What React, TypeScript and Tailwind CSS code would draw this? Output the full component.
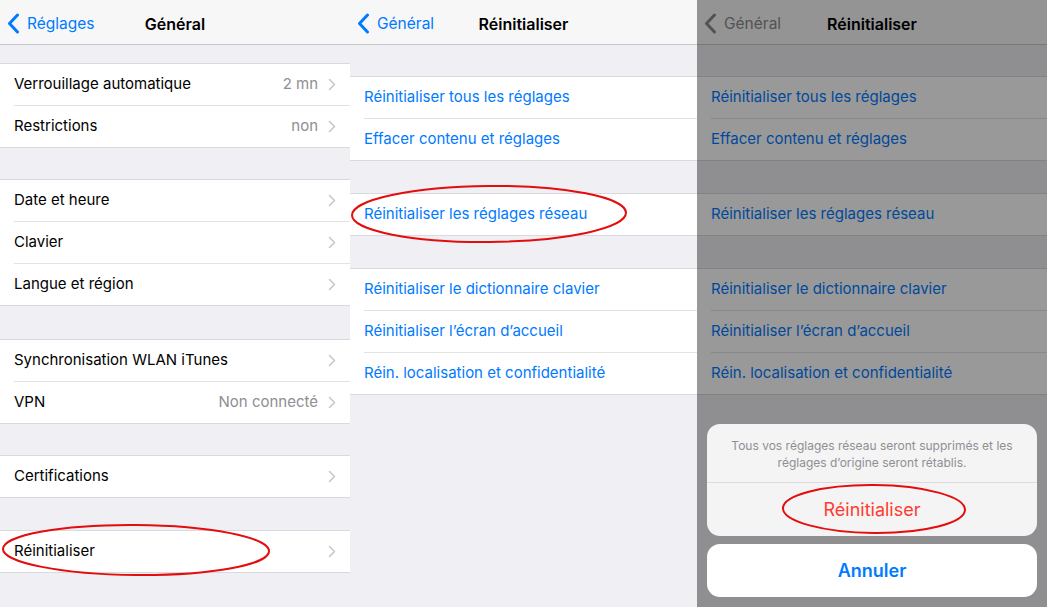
import type { FC, ReactNode } from 'react'

const FONT = "font-['Inter','Liberation_Sans',sans-serif]"

const Chevron: FC = () => (
  <svg width="8" height="13" viewBox="0 0 8 13" fill="none" className="ml-[10px] shrink-0">
    <path d="M1.5 1.5L6.5 6.5L1.5 11.5" stroke="#c7c7cc" strokeWidth="1.6" strokeLinecap="round" strokeLinejoin="round" />
  </svg>
)

const BackChevron: FC<{ color: string }> = ({ color }) => (
  <svg width="13" height="21" viewBox="0 0 13 21" fill="none">
    <path d="M10.5 2L2.5 10.5L10.5 19" stroke={color} strokeWidth="3" strokeLinecap="round" strokeLinejoin="round" />
  </svg>
)

type Row = { label: string; value?: string; chevron?: boolean }

const NavBar: FC<{ back: string; title: string; dim?: boolean }> = ({ back, title, dim }) => (
  <div className="relative h-[45px] shrink-0 bg-[#f7f7f8] border-b border-[#c8c7cc] flex items-center pt-[3px]">
    <div className="flex items-center gap-[7px] pl-[7px]">
      <BackChevron color={dim ? '#8a8a8a' : '#007aff'} />
      <span className={`text-[15.5px] ${dim ? 'text-[#8a8a8a]' : 'text-[#007aff]'}`}>{back}</span>
    </div>
    <div className="absolute inset-0 pt-[3px] flex items-center justify-center pointer-events-none">
      <span className="text-[16px] font-semibold text-black">{title}</span>
    </div>
  </div>
)

const Group: FC<{ rows: Row[]; blue?: boolean; mt: string }> = ({ rows, blue, mt }) => (
  <div className={`${mt} bg-white border-t border-[#d9d9de]`}>
    {rows.map((r, i) => (
      <div key={r.label} className="pl-[14px]">
        <div
          className={`h-[42px] flex items-center pr-[14px] border-b ${
            i === rows.length - 1 ? 'border-[#d9d9de] -ml-[14px] pl-[14px]' : 'border-[#e3e3e6]'
          }`}
        >
          <span className={`flex-1 text-[15px] ${blue ? 'text-[#007aff]' : 'text-black'}`}>{r.label}</span>
          {r.value && <span className="text-[15px] text-[#8e8e93]">{r.value}</span>}
          {r.chevron && <Chevron />}
        </div>
      </div>
    ))}
  </div>
)

const Ellipse: FC<{ cx: number; cy: number; rx: number; ry: number; rot?: number }> = ({ cx, cy, rx, ry, rot = 0 }) => (
  <svg className="absolute inset-0 w-full h-full pointer-events-none" fill="none">
    <ellipse cx={cx} cy={cy} rx={rx} ry={ry} stroke="#e30d0d" strokeWidth="2" transform={`rotate(${rot} ${cx} ${cy})`} />
  </svg>
)

const ResetList: FC = () => (
  <>
    <Group
      mt="mt-[31px]"
      blue
      rows={[{ label: 'Réinitialiser tous les réglages' }, { label: 'Effacer contenu et réglages' }]}
    />
    <Group mt="mt-[32px]" blue rows={[{ label: 'Réinitialiser les réglages réseau' }]} />
    <Group
      mt="mt-[32px]"
      blue
      rows={[
        { label: 'Réinitialiser le dictionnaire clavier' },
        { label: 'Réinitialiser l’écran d’accueil' },
        { label: 'Réin. localisation et confidentialité' },
      ]}
    />
  </>
)

const Panel: FC<{ width: string; children: ReactNode }> = ({ width, children }) => (
  <div className={`${width} h-[607px] relative flex flex-col bg-[#efeff4] overflow-hidden`}>{children}</div>
)

export default function App() {
  return (
    <div className={`${FONT} flex w-[1047px] h-[607px] overflow-hidden antialiased`}>
      {/* Général */}
      <Panel width="w-[350px]">
        <NavBar back="Réglages" title="Général" />
        <Group
          mt="mt-[18px]"
          rows={[
            { label: 'Verrouillage automatique', value: '2 mn', chevron: true },
            { label: 'Restrictions', value: 'non', chevron: true },
          ]}
        />
        <Group
          mt="mt-[31px]"
          rows={[
            { label: 'Date et heure', chevron: true },
            { label: 'Clavier', chevron: true },
            { label: 'Langue et région', chevron: true },
          ]}
        />
        <Group
          mt="mt-[33px]"
          rows={[
            { label: 'Synchronisation WLAN iTunes', chevron: true },
            { label: 'VPN', value: 'Non connecté', chevron: true },
          ]}
        />
        <Group mt="mt-[31px]" rows={[{ label: 'Certifications', chevron: true }]} />
        <Group mt="mt-[32px]" rows={[{ label: 'Réinitialiser', chevron: true }]} />
        <Ellipse cx={136} cy={550} rx={133} ry={25} rot={0.5} />
      </Panel>

      {/* Réinitialiser */}
      <Panel width="w-[347px]">
        <NavBar back="Général" title="Réinitialiser" />
        <ResetList />
        <Ellipse cx={139} cy={214} rx={137} ry={28} rot={-0.5} />
      </Panel>

      {/* Réinitialiser with action sheet */}
      <Panel width="w-[350px]">
        <NavBar back="Général" title="Réinitialiser" dim />
        <ResetList />
        <div className="absolute inset-0 bg-black/40" />
        <div className="absolute left-[10px] right-[10px] bottom-[10px] flex flex-col gap-[8px]">
          <div className="rounded-[13px] bg-[#f4f4f5] overflow-hidden">
            <div className="px-[16px] pt-[13px] pb-[11px] text-center text-[12px] leading-[17px] text-[#8f8f93] border-b border-[#dcdcdf]">
              Tous vos réglages réseau seront supprimés et les réglages d’origine seront rétablis.
            </div>
            <div className="h-[53px] flex items-center justify-center text-[18px] text-[#ff3b30]">Réinitialiser</div>
          </div>
          <div className="h-[53px] rounded-[13px] bg-white flex items-center justify-center text-[18px] font-semibold text-[#007aff]">
            Annuler
          </div>
        </div>
        <Ellipse cx={177} cy={509} rx={91} ry={24} rot={0.5} />
      </Panel>
    </div>
  )
}
